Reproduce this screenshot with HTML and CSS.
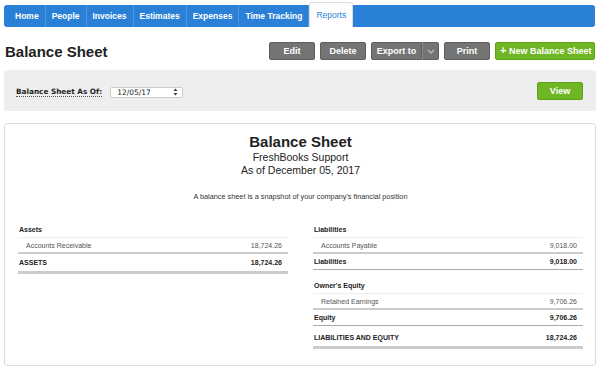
FILE: index.html
```html
<!DOCTYPE html>
<html lang="en">
<head>
    <meta charset="UTF-8">
    <meta name="viewport" content="width=device-width, initial-scale=1.0">
    <title>Balance Sheet</title>
    <link rel="stylesheet" href="styles.css">
</head>
<body>

    <!-- Main navigation -->
    <nav class="navbar">
        <a href="#">Home</a>
        <a href="#">People</a>
        <a href="#">Invoices</a>
        <a href="#">Estimates</a>
        <a href="#">Expenses</a>
        <a href="#">Time Tracking</a>
        <a href="#" class="active">Reports</a>
    </nav>

    <!-- Title and actions -->
    <div class="title-row">
        <h1>Balance Sheet</h1>
        <div class="actions">
            <button class="btn">Edit</button>
            <button class="btn">Delete</button>
            <div class="btn-split">
                <button class="btn split-main">Export to</button>
                <button class="btn split-arrow">
                    <svg width="8" height="5" viewBox="0 0 8 5"><path d="M1 1l3 3 3-3" fill="none" stroke="#bbb" stroke-width="1.3"/></svg>
                </button>
            </div>
            <button class="btn">Print</button>
            <button class="btn btn-green btn-new"><span class="plus">+</span> New Balance Sheet</button>
        </div>
    </div>

    <!-- Filter -->
    <div class="filter">
        <label class="filter-label">Balance Sheet As Of:</label>
        <div class="date-select">
            <span>12/05/17</span>
            <svg width="5" height="8" viewBox="0 0 5 8"><path d="M2.5 0.5L4.5 3H0.5z M2.5 7.5L0.5 5h4z" fill="#333"/></svg>
        </div>
        <button class="btn btn-green btn-view">View</button>
    </div>

    <!-- Report -->
    <section class="report">
        <div class="report-head">
            <h2>Balance Sheet</h2>
            <p class="company">FreshBooks Support</p>
            <p class="date">As of December 05, 2017</p>
            <p class="desc">A balance sheet is a snapshot of your company's financial position</p>
        </div>

        <div class="columns">
            <div class="col">
                <div class="group-title">Assets</div>
                <div class="line-row"><span>Accounts Receivable</span><span>18,724.26</span></div>
                <div class="grand-row"><span>ASSETS</span><span>18,724.26</span></div>
            </div>
            <div class="col">
                <div class="group-title">Liabilities</div>
                <div class="line-row"><span>Accounts Payable</span><span>9,018.00</span></div>
                <div class="sub-row"><span>Liabilities</span><span>9,018.00</span></div>

                <div class="group-title spaced">Owner's Equity</div>
                <div class="line-row"><span>Retained Earnings</span><span>9,706.26</span></div>
                <div class="sub-row"><span>Equity</span><span>9,706.26</span></div>
                <div class="grand-row"><span>LIABILITIES AND EQUITY</span><span>18,724.26</span></div>
            </div>
        </div>
    </section>

</body>
</html>
```

FILE: styles.css
```css
/* General */
body {
    font-family: "Liberation Sans", Arial, sans-serif;
    margin: 0;
    padding: 0;
    color: #222;
    background: #fff;
}

/* Navigation bar */
.navbar {
    display: flex;
    height: 22px;
    margin: 5px 5px 0 4px;
    padding-left: 5px;
    background-color: #2a7fd6;
    border-radius: 3px;
}

.navbar a {
    display: flex;
    align-items: center;
    padding: 0 6px;
    color: white;
    font-size: 8.5px;
    font-weight: bold;
    text-decoration: none;
    white-space: nowrap;
    border-right: 1px solid rgba(255, 255, 255, 0.18);
}

.navbar a.active {
    margin-top: -3px;
    height: 25px;
    padding: 0 6px;
    background-color: white;
    color: #2a7fd6;
    font-weight: normal;
    border: 1px solid #ddd;
    border-bottom: none;
    border-radius: 3px 3px 0 0;
    box-sizing: border-box;
}

/* Title row */
.title-row {
    display: flex;
    justify-content: space-between;
    align-items: center;
    margin: 15px 5px 0 5px;
}

h1 {
    margin: 0;
    font-size: 15px;
    font-weight: bold;
}

.actions {
    display: flex;
    gap: 5px;
}

.btn {
    height: 18px;
    min-width: 46px;
    padding: 0 4px;
    background-color: #747474;
    border: 1px solid #5e5e5e;
    border-radius: 2px;
    color: white;
    font-family: inherit;
    font-size: 9px;
    font-weight: bold;
    white-space: nowrap;
    cursor: pointer;
    box-sizing: border-box;
}

.btn-split {
    display: flex;
}

.split-main {
    width: 51px;
    border-radius: 2px 0 0 2px;
}

.split-arrow {
    min-width: 0;
    width: 17px;
    padding: 0;
    border-left-color: #888;
    border-radius: 0 2px 2px 0;
}

.btn-green {
    background-color: #6fb624;
    border-color: #5ea11a;
}

.btn-new {
    width: 100px;
}

.plus {
    font-size: 11px;
    line-height: 0;
}

/* Filter */
.filter {
    display: flex;
    align-items: center;
    height: 41px;
    margin: 10px 4px 0 4px;
    padding: 0 13px 0 12px;
    background-color: #eee;
    border-radius: 3px;
}

.filter-label {
    font-family: "DejaVu Sans", Verdana, sans-serif;
    font-size: 7.3px;
    font-weight: bold;
    color: #222;
    border-bottom: 1px dotted #555;
    margin-top: 2px;
}

.date-select {
    display: flex;
    justify-content: space-between;
    align-items: center;
    width: 73px;
    height: 11px;
    margin-left: 8px;
    margin-top: 3px;
    padding: 0 4px 0 6px;
    background: white;
    border: 1px solid #ccc;
    border-radius: 2px;
    box-sizing: border-box;
    font-family: "DejaVu Sans", Verdana, sans-serif;
    font-size: 7.5px;
}

.btn-view {
    margin-left: auto;
    height: 18px;
}

/* Report card */
.report {
    position: relative;
    height: 243px;
    margin: 12px 4px 0 4px;
    padding: 9px 12px 0 13px;
    background: white;
    border: 1px solid #ddd;
    border-radius: 3px;
    box-sizing: border-box;
}

/* Lifted corners under the card */
.report::before,
.report::after {
    content: "";
    position: absolute;
    z-index: -1;
    bottom: 5px;
    height: 10px;
    box-shadow: 0 5px 3px rgba(0, 0, 0, 0.35);
}

.report::before {
    left: 6px;
    width: 30%;
    transform: rotate(-1.5deg);
}

.report::after {
    right: 6px;
    width: 40%;
    transform: rotate(1.2deg);
}

.report-head {
    text-align: center;
}

.report-head h2 {
    margin: 0;
    font-size: 15px;
    line-height: 18px;
}

.report-head p {
    margin: 0;
}

.company {
    font-size: 10.5px;
    line-height: 13px;
}

.date {
    font-size: 10.5px;
    line-height: 13px;
}

.report-head .desc {
    margin-top: 15px;
    font-size: 7.3px;
    color: #333;
}

/* Columns */
.columns {
    display: grid;
    grid-template-columns: 1fr 1fr;
    gap: 25px;
    margin-top: 20px;
}

.col > div {
    display: flex;
    justify-content: space-between;
    font-size: 7px;
    padding: 0 6px 0 1px;
}

.group-title {
    height: 16px;
    align-items: center;
    font-weight: bold;
    border-bottom: 1px solid #eee;
}

.group-title.spaced {
    margin-top: 7px;
}

.line-row {
    height: 14px;
    align-items: center;
    color: #555;
    border-bottom: 2px solid #ccc;
}

.line-row span:first-child {
    padding-left: 7px;
}

.sub-row {
    height: 15px;
    align-items: center;
    font-weight: bold;
    border-bottom: 1px solid #aaa;
}

.grand-row {
    height: 17px;
    align-items: center;
    font-weight: bold;
    border-bottom: 3px solid #ccc;
}

.sub-row + .grand-row {
    margin-top: 3px;
}
```
